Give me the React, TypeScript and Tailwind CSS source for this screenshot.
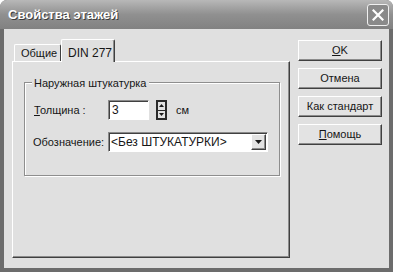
import React from 'react';

const raised =
  'border border-t-white border-l-white border-r-[#404040] border-b-[#404040] shadow-[inset_-1px_-1px_0_#8c8c8c] bg-[#e3e3e3]';
const sunken =
  'border border-t-[#8a8a8a] border-l-[#8a8a8a] border-r-white border-b-white shadow-[inset_1px_1px_0_#404040] bg-white';

const DialogButton = ({ children }: { children: React.ReactNode }) => (
  <div className={`flex h-[21px] w-[84px] items-center justify-center text-[11px] text-[#161616] ${raised}`}>
    {children}
  </div>
);

const Arrow = ({ up }: { up?: boolean }) => (
  <svg width="5" height="3" viewBox="0 0 5 3">
    <path d={up ? 'M2.5 0 L5 3 L0 3 Z' : 'M0 0 L5 0 L2.5 3 Z'} fill="#1a1a1a" />
  </svg>
);

export default function App() {
  return (
    <div className="h-[272px] w-[393px] bg-white" style={{ fontFamily: '"Liberation Sans", Arial, sans-serif' }}>
      <div className="flex h-full flex-col rounded-t-[7px] bg-[#6c6c6c]">
        {/* Title bar */}
        <div className="flex h-[29px] items-center justify-between rounded-t-[7px] bg-gradient-to-b from-[#b8b8b8] via-[#909090] to-[#818181] pl-[8px] pr-[4px]">
          <span className="text-[13px] font-bold text-white [text-shadow:1px_1px_0_#3c3c3c]">Свойства этажей</span>
          <div className="flex h-[22px] w-[22px] items-center justify-center rounded-[3px] border border-[#f0f0f0] bg-[#8a8a8a]">
            <svg width="12" height="12" viewBox="0 0 12 12">
              <path d="M1.5 1.5 L10.5 10.5 M10.5 1.5 L1.5 10.5" stroke="white" strokeWidth="2.2" strokeLinecap="square" />
            </svg>
          </div>
        </div>

        {/* Body */}
        <div className="mx-[4px] mb-[4px] flex flex-1 gap-[8px] bg-[#e0e0e0] pl-[8px] pt-[10px] text-[11px] text-[#161616]">
          {/* Tabs + panel */}
          <div className="flex w-[278px] flex-col">
            <div className="flex h-[22px] items-end">
              <div className="ml-[2px] flex h-[17px] w-[47px] items-center rounded-t-[2px] border-l border-t border-r border-l-white border-t-white border-r-[#404040] pl-[6px] pt-[1px]">
                Общие
              </div>
              <div className="relative z-10 -mb-[1px] flex h-[23px] w-[54px] items-start rounded-t-[2px] border-l border-t border-r border-l-white border-t-white border-r-[#404040] bg-[#e0e0e0] pl-[6px] pt-[4px] text-[12px] shadow-[inset_-1px_0_0_#8c8c8c]">
                DIN 277
              </div>
            </div>
            <div className="h-[197px] border border-t-white border-l-white border-r-[#404040] border-b-[#404040] shadow-[inset_-1px_-1px_0_#8c8c8c]">
              <div className="relative ml-[11px] mr-[9px] mt-[20px] h-[94px] border border-[#8e8e8e] shadow-[inset_1px_1px_0_#fff,1px_1px_0_#fff]">
                <span className="absolute -top-[7px] left-[7px] bg-[#e0e0e0] px-[2px] leading-[14px]">Наружная штукатурка</span>

                <div className="ml-[9px] mt-[17px] flex items-center">
                  <span className="w-[74px]">
                    <span className="underline">Т</span>олщина :
                  </span>
                  <div className={`flex h-[20px] w-[41px] items-center pl-[3px] text-[12px] ${sunken}`}>3</div>
                  <div className="ml-[7px] flex h-[20px] w-[11px] flex-col border border-[#2a2a2a] bg-[#2a2a2a] p-px gap-px">
                    <div className="flex flex-1 items-center justify-center bg-[#e3e3e3]">
                      <Arrow up />
                    </div>
                    <div className="flex flex-1 items-center justify-center bg-[#e3e3e3]">
                      <Arrow />
                    </div>
                  </div>
                  <span className="ml-[9px]">см</span>
                </div>

                <div className="ml-[8px] mt-[12px] flex items-center">
                  <span className="w-[75px]">Обозначение:</span>
                  <div className={`flex h-[20px] w-[160px] items-center justify-between pl-[2px] pr-px text-[12px] ${sunken}`}>
                    <span>&lt;Без ШТУКАТУРКИ&gt;</span>
                    <div className={`flex h-[16px] w-[15px] items-center justify-center ${raised}`}>
                      <svg width="7" height="4" viewBox="0 0 7 4">
                        <path d="M0 0 L7 0 L3.5 4 Z" fill="#1a1a1a" />
                      </svg>
                    </div>
                  </div>
                </div>
              </div>
            </div>
          </div>

          {/* Buttons */}
          <div className="mt-[1px] flex flex-col gap-[7px]">
            <DialogButton>
              <span className="underline">O</span>K
            </DialogButton>
            <DialogButton>Отмена</DialogButton>
            <DialogButton>Как стандарт</DialogButton>
            <DialogButton>
              <span className="underline">П</span>омощь
            </DialogButton>
          </div>
        </div>
      </div>
    </div>
  );
}
